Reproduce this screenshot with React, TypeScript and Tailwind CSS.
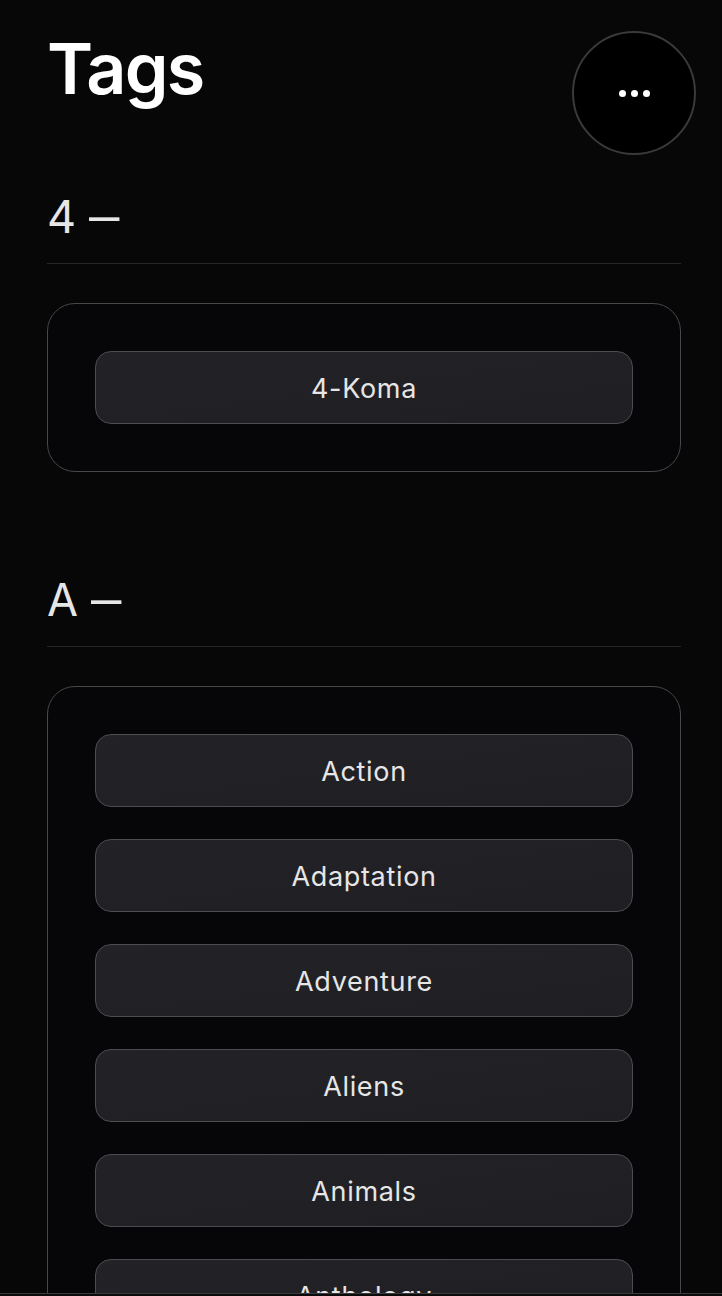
import React from 'react';

const groups: { letter: string; tags: string[] }[] = [
    { letter: '4', tags: ['4-Koma'] },
    { letter: 'A', tags: ['Action', 'Adaptation', 'Adventure', 'Aliens', 'Animals', 'Anthology', 'Award Winning'] },
];

const TagGroup: React.FC<{ letter: string; tags: string[] }> = ({ letter, tags }) => (
    <section>
        <h2 className="text-[45px] leading-none font-normal text-[#e6e6e6] pb-[24px] border-b border-[#262628]">
            {letter} <span className="inline-block scale-x-[1.35] origin-left">–</span>
        </h2>
        <div className="mt-[39px] rounded-[28px] border border-[#48484c] bg-[#060608] p-[47px] flex flex-col gap-[32px]">
            {tags.map((tag) => (
                <button
                    key={tag}
                    className="h-[73px] w-full pt-[3px] rounded-[16px] border border-[#4c4c51] bg-gradient-to-br from-[#232327] to-[#1f1f23] text-[27px] tracking-wide text-[#e6e6e6]"
                >
                    {tag}
                </button>
            ))}
        </div>
    </section>
);

export default function App() {
    return (
        <div className="min-h-screen bg-[#070707] pl-[47px] pr-[41px] pt-[34px] font-['Inter',sans-serif]">
            <h1 className="text-[70px] leading-[70px] font-semibold tracking-tight text-white">Tags</h1>

            {/* Floating menu button */}
            <button className="fixed top-[31px] right-[26px] w-[124px] h-[124px] rounded-full border-2 border-[#3a3a3c] bg-black flex items-center justify-center gap-[5px]">
                <span className="w-[7px] h-[7px] rounded-full bg-white" />
                <span className="w-[7px] h-[7px] rounded-full bg-white" />
                <span className="w-[7px] h-[7px] rounded-full bg-white" />
            </button>

            <div className="mt-[90px] flex flex-col gap-[105px] pb-[120px]">
                {groups.map((g) => (
                    <TagGroup key={g.letter} letter={g.letter} tags={g.tags} />
                ))}
            </div>

            <div className="fixed bottom-0 left-0 right-0 h-[3px] border-t border-[#3a3a3c] bg-[#0b0b0c]" />
        </div>
    );
}
